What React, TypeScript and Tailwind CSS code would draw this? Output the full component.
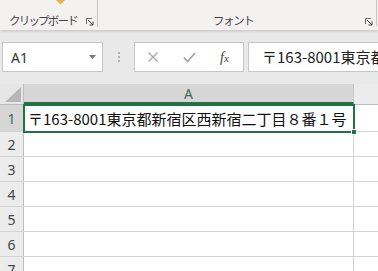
import React from "react";

const jp = "font-['Noto_Sans_CJK_JP','Noto_Sans',sans-serif]";

function Launcher() {
    return (
        <svg width="8" height="8" viewBox="0 0 8 8" className="shrink-0">
            <path d="M0.5 6V0.5H6" fill="none" stroke="#6b6b6b" strokeWidth="1" />
            <path d="M2 2L7 7M7 3.5V7H3.5" fill="none" stroke="#444" strokeWidth="1" />
        </svg>
    );
}

const rows = [2, 3, 4, 5, 6, 7];

export default function App() {
    return (
        <div className={`w-[378px] h-[271px] overflow-hidden bg-[#e9e9e9] ${jp}`}>
            {/* ribbon groups */}
            <div className="flex h-[30px] bg-[#f3f2f1] shadow-[0_1px_3px_rgba(0,0,0,0.18)] relative z-10">
                <div className="relative flex w-[97px] items-end pb-[2px]">
                    <div className="absolute left-[57px] top-[-4px] h-[7px] w-[7px] rotate-45 bg-[#e8b24f]" />
                    <span className="ml-[9px] text-[11.5px] leading-[15px] tracking-[-1.8px] text-[#444]">クリップボード</span>
                    <div className="ml-auto mr-[3px] mb-[2px]">
                        <Launcher />
                    </div>
                </div>
                <div className="w-px h-[27px] bg-[#c8c6c4]" />
                <div className="flex w-[278px] items-end pb-[2px]">
                    <span className="ml-[115px] text-[11.5px] leading-[15px] tracking-[-1.4px] text-[#444]">フォント</span>
                    <div className="ml-auto mr-[3px] mb-[2px]">
                        <Launcher />
                    </div>
                </div>
                <div className="w-px h-[26px] bg-[#c8c6c4]" />
            </div>

            {/* formula bar */}
            <div className="flex h-[30px] mt-[12px] items-stretch">
                <div className="ml-[2px] flex w-[101px] items-center border border-[#c6c6c6] bg-white">
                    <span className="ml-[8px] text-[14px] text-[#333] font-['Noto_Sans',sans-serif]">A1</span>
                    <svg width="7" height="4" viewBox="0 0 7 4" className="ml-auto mr-[6px]">
                        <path d="M0 0H7L3.5 4Z" fill="#777" />
                    </svg>
                </div>
                <div className="flex w-[31px] flex-col items-center justify-center gap-[2px]">
                    <div className="h-[2px] w-[2px] bg-[#b0b0b0]" />
                    <div className="h-[2px] w-[2px] bg-[#b0b0b0]" />
                    <div className="h-[2px] w-[2px] bg-[#b0b0b0]" />
                </div>
                <div className="flex w-[110px] items-center border border-[#c6c6c6] bg-white">
                    <svg width="10" height="10" viewBox="0 0 10 10" className="ml-[13px]">
                        <path d="M0.5 0.5L9.5 9.5M9.5 0.5L0.5 9.5" stroke="#a6a6a6" strokeWidth="1.3" />
                    </svg>
                    <svg width="13" height="11" viewBox="0 0 13 11" className="ml-[25px]">
                        <path d="M0.8 5.5L4.5 9.5L12.2 1" fill="none" stroke="#a6a6a6" strokeWidth="1.8" />
                    </svg>
                    <span className="ml-[24px] text-[14px] italic text-[#3c3c3c] font-['Liberation_Serif',serif]">
                        f<span className="text-[11px]">x</span>
                    </span>
                </div>
                <div className="ml-[4px] flex flex-1 items-center overflow-hidden whitespace-nowrap border border-r-0 border-[#c6c6c6] bg-white">
                    <span className="ml-[13px] text-[15px] text-[#222]">〒163-8001東京都新宿区西新宿二丁目８番１号</span>
                </div>
            </div>

            {/* grid */}
            <div className="mt-[12px] bg-white">
                <div className="flex h-[21px] border-b border-[#bdbdbd] bg-[#e6e6e6]">
                    <div className="relative w-[24px] border-r border-[#bdbdbd]">
                        <svg width="16" height="15" viewBox="0 0 16 15" className="absolute right-[2px] bottom-[2px]">
                            <path d="M16 0V15H0Z" fill="#b6b6b6" />
                        </svg>
                    </div>
                    <div className="flex w-[330px] items-center justify-center border-r border-[#c6c6c6] border-b-2 border-b-[#217346] bg-[#d6d6d6]">
                        <span className="text-[14px] text-[#3f6b52] font-['Noto_Sans',sans-serif]">A</span>
                    </div>
                    <div className="flex-1 bg-[#ececec]" />
                </div>

                <div className="relative flex h-[27px] border-b border-[#d4d4d4]">
                    <div className="flex w-[24px] items-center justify-center border-r border-[#bdbdbd] bg-[#d6d6d6] text-[14px] text-[#3f6b52] font-['Noto_Sans',sans-serif]">
                        1
                    </div>
                    <div className="flex w-[330px] items-center overflow-visible whitespace-nowrap border-r border-[#d4d4d4] pl-[4px]">
                        <span className="text-[15px] leading-none text-[#111]">〒163-8001東京都新宿区西新宿二丁目８番１号</span>
                    </div>
                    <div className="flex-1" />
                    <div className="pointer-events-none absolute left-[23px] top-[-1px] h-[29px] w-[332px] border-2 border-[#217346]" />
                    <div className="absolute left-[351px] top-[24px] h-[6px] w-[6px] border border-white bg-[#217346]" />
                </div>

                {rows.map((r) => (
                    <div key={r} className="flex h-[25px] border-b border-[#d4d4d4]">
                        <div className="flex w-[24px] items-center justify-center border-r border-[#bdbdbd] bg-[#ececec] text-[14px] text-[#444] font-['Noto_Sans',sans-serif]">
                            {r}
                        </div>
                        <div className="w-[330px] border-r border-[#d4d4d4]" />
                        <div className="flex-1" />
                    </div>
                ))}
            </div>
        </div>
    );
}
